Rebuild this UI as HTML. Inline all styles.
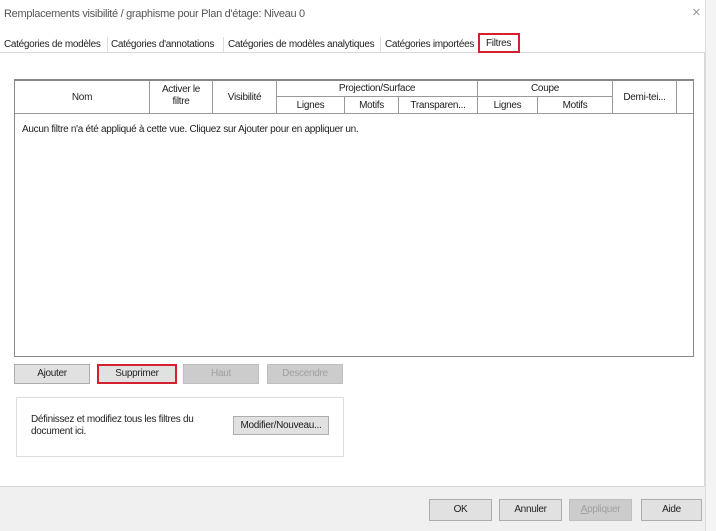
<!DOCTYPE html><html><head><style>
body{margin:0;width:716px;height:531px;background:#fff;font-family:"Liberation Sans",sans-serif;font-size:10px;color:#222;position:relative;overflow:hidden;letter-spacing:-0.3px}
div{position:absolute;box-sizing:border-box}
.t{white-space:nowrap}
.btn{background:#e1e1e1;border:1px solid #adadad;text-align:center;line-height:12px;padding-top:3px}
.b2{padding-top:4px}
.dis{color:#a0a0a0;background:#ccc;border-color:#bfbfbf}
.c{border-right:1px solid #999;text-align:center}
</style></head><body>
<div class="t" style="left:4px;top:8px;font-size:11px;color:#555">Remplacements visibilité / graphisme pour Plan d'étage: Niveau 0</div>
<div class="t" style="left:692px;top:4px;font-size:15px;color:#999">×</div>
<div style="left:0;top:52px;width:705px;height:435px;border:1px solid #d9d9d9;border-left:none"></div>
<div style="left:705px;top:0;width:11px;height:531px;background:#f4f4f4;border-left:1px solid #ddd"></div>
<div style="left:0;top:36px;width:480px;height:17px;background:#fff;border-bottom:1px solid #d9d9d9"></div>
<div style="left:107px;top:37px;width:1px;height:15px;background:#ddd"></div>
<div style="left:223px;top:37px;width:1px;height:15px;background:#ddd"></div>
<div style="left:380px;top:37px;width:1px;height:15px;background:#ddd"></div>
<div class="t" style="left:4px;top:39px">Catégories de modèles</div>
<div class="t" style="left:111px;top:39px">Catégories d'annotations</div>
<div class="t" style="left:228px;top:39px">Catégories de modèles analytiques</div>
<div class="t" style="left:385px;top:39px">Catégories importées</div>
<div style="left:478px;top:33px;width:42px;height:20px;border:2px solid #d3212f;background:#fff"></div>
<div class="t" style="left:486px;top:38px">Filtres</div>
<div style="left:14px;top:79px;width:680px;height:278px;border:1px solid #888;border-top:2px solid #888"></div>
<div style="left:15px;top:81px;width:678px;height:33px;background:#fff;border-bottom:1px solid #999"></div>
<div class="c" style="left:15px;top:81px;width:135px;height:33px;line-height:33px">Nom</div>
<div class="c" style="left:150px;top:81px;width:63px;height:33px;line-height:12px;padding-top:3px">Activer le<br>filtre</div>
<div class="c" style="left:213px;top:81px;width:64px;height:33px;line-height:33px">Visibilité</div>
<div class="c" style="left:277px;top:81px;width:201px;height:16px;line-height:16px;border-bottom:1px solid #999">Projection/Surface</div>
<div class="c" style="left:277px;top:97px;width:68px;height:17px;line-height:17px">Lignes</div>
<div class="c" style="left:345px;top:97px;width:54px;height:17px;line-height:17px">Motifs</div>
<div class="c" style="left:399px;top:97px;width:79px;height:17px;line-height:17px">Transparen...</div>
<div class="c" style="left:478px;top:81px;width:135px;height:16px;line-height:16px;border-bottom:1px solid #999">Coupe</div>
<div class="c" style="left:478px;top:97px;width:60px;height:17px;line-height:17px">Lignes</div>
<div class="c" style="left:538px;top:97px;width:75px;height:17px;line-height:17px">Motifs</div>
<div class="c" style="left:613px;top:81px;width:64px;height:33px;line-height:33px">Demi-tei...</div>
<div class="t" style="left:22px;top:124px">Aucun filtre n'a été appliqué à cette vue. Cliquez sur Ajouter pour en appliquer un.</div>
<div class="btn" style="left:14px;top:364px;width:76px;height:20px">Ajouter</div>
<div class="btn" style="left:97px;top:364px;width:80px;height:20px;border:2px solid #d3212f;padding-top:2px">Supprimer</div>
<div class="btn dis" style="left:183px;top:364px;width:76px;height:20px">Haut</div>
<div class="btn dis" style="left:267px;top:364px;width:76px;height:20px">Descendre</div>
<div style="left:16px;top:397px;width:328px;height:60px;border:1px solid #ddd"></div>
<div style="left:31px;top:414px;line-height:12px">Définissez et modifiez tous les filtres du<br>document ici.</div>
<div class="btn" style="left:233px;top:416px;width:96px;height:19px">Modifier/Nouveau...</div>
<div style="left:0;top:487px;width:705px;height:44px;background:#f0f0f0"></div>
<div class="btn b2" style="left:429px;top:499px;width:63px;height:22px">OK</div>
<div class="btn b2" style="left:499px;top:499px;width:63px;height:22px">Annuler</div>
<div class="btn b2 dis" style="left:569px;top:499px;width:63px;height:22px"><u>A</u>ppliquer</div>
<div class="btn b2" style="left:641px;top:499px;width:61px;height:22px">Aide</div>
</body></html>
